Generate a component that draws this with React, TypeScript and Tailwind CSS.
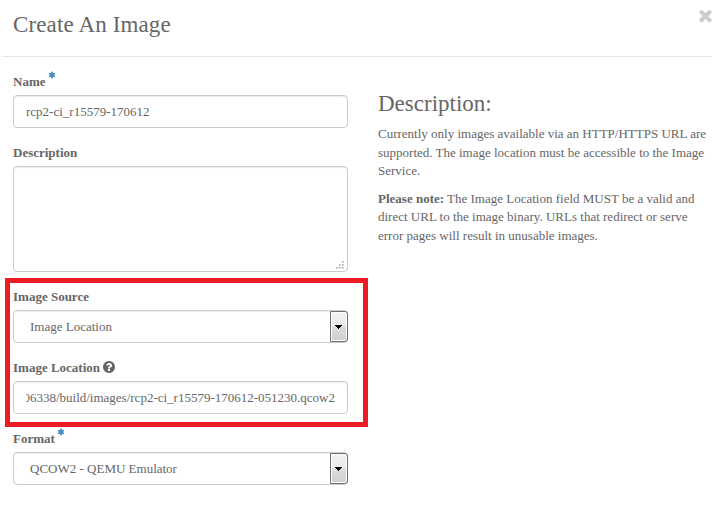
import type { ReactNode } from 'react';

const TIMES =
  'M1490 1322q0 40-28 68l-136 136q-28 28-68 28t-68-28l-294-294-294 294q-28 28-68 28t-68-28l-136-136q-28-28-28-68t28-68l294-294-294-294q-28-28-28-68t28-68l136-136q28-28 68-28t68 28l294 294 294-294q28-28 68-28t68 28l136 136q28 28 28 68t-28 68l-294 294 294 294q28 28 28 68z';
const QUESTION =
  'M1024 1376v-192q0-14-9-23t-23-9h-192q-14 0-23 9t-9 23v192q0 14 9 23t23 9h192q14 0 23-9t9-23zm256-672q0-88-55.5-163t-138.5-116-170-41q-243 0-371 213-15 24 8 42l132 100q7 6 19 6 16 0 25-12 53-68 86-92 34-24 86-24 48 0 85.5 26t37.5 59q0 38-20 61t-68 45q-63 28-115.5 86.5t-52.5 125.5v36q0 14 9 23t23 9h192q14 0 23-9t9-23q0-19 21.5-49.5t54.5-49.5q32-18 49-28.5t46-35 44.5-48 28-60.5 12.5-81zm384 192q0 209-103 385.5t-279.5 279.5-385.5 103-385.5-103-279.5-279.5-103-385.5 103-385.5 279.5-279.5 385.5-103 385.5 103 279.5 279.5 103 385.5z';
const ASTERISK =
  'M1546 1050q46 26 59.5 77.5t-12.5 97.5l-64 110q-26 46-77.5 59.5t-97.5-12.5l-266-153v307q0 52-38 90t-90 38h-128q-52 0-90-38t-38-90v-307l-266 153q-46 26-97.5 12.5t-77.5-59.5l-64-110q-26-46-12.5-97.5t59.5-77.5l266-154-266-154q-46-26-59.5-77.5t12.5-97.5l64-110q26-46 77.5-59.5t97.5 12.5l266 153v-307q0-52 38-90t90-38h128q52 0 90 38t38 90v307l266-153q46-26 97.5-12.5t77.5 59.5l64 110q26 46 12.5 97.5t-59.5 77.5l-266 154z';

function Icon({ d, className }: { d: string; className: string }) {
  return (
    <svg viewBox="0 0 1792 1792" fill="currentColor" className={className} aria-hidden="true">
      <path d={d} />
    </svg>
  );
}

function Label({ children, required, help }: { children: ReactNode; required?: boolean; help?: boolean }) {
  return (
    <div className="flex h-[18px] items-start font-bold leading-[18px] text-[#666]">
      <span>{children}</span>
      {required && <Icon d={ASTERISK} className="-mt-0.5 ml-[2.5px] size-[8px] text-[#428bca]" />}
      {help && <Icon d={QUESTION} className="ml-[2px] mt-[1px] size-[14px]" />}
    </div>
  );
}

const BOX = 'w-[335px] rounded-[4px] border border-[#ccc] bg-white shadow-[inset_0_1px_1px_rgba(0,0,0,0.075)]';

function Select({ value }: { value: string }) {
  return (
    <div className={`${BOX} mt-[4px] flex h-[33px] justify-between`}>
      <span className="pl-4 leading-[32px]">{value}</span>
      <span className="-mr-px flex w-[18px] items-center justify-center rounded-r-[3px] border border-[#707070] bg-[linear-gradient(#f2f2f2_0%,#ebebeb_49%,#dddddd_50%,#cfcfcf_100%)] shadow-[inset_0_0_0_1px_#fcfcfc]">
        <svg width="7" height="4" viewBox="0 0 7 4" shapeRendering="crispEdges" className="-ml-px mt-px">
          <path d="M0 0h7v1H6v1H5v1H4v1H3V3H2V2H1V1H0z" fill="#000" />
        </svg>
      </span>
    </div>
  );
}

export default function App() {
  return (
    <div className="relative h-[511px] w-[712px] overflow-hidden bg-white font-['Liberation_Serif','Times_New_Roman',serif] text-[13px] text-[#666]">
      <header className="ml-[3px] flex h-[57px] justify-between border-b border-[#e5e5e5] pl-[10px]">
        <h4 className="mt-[11px] text-[23px] leading-[28px] tracking-[0.13px]">Create An Image</h4>
        <button aria-label="Close" className="-mr-[3px] mt-[5.5px] size-[19px] text-[#ccc]">
          <Icon d={TIMES} className="size-[19px]" />
        </button>
      </header>
      <main className="flex pl-[13px]">
        <form className="w-[365px] pt-[16px]">
          <div className="h-[71px]">
            <Label required>Name</Label>
            <div className={`${BOX} mt-[4px] h-[33px] pl-3 leading-[32px]`}>rcp2-ci_r15579-170612</div>
          </div>
          <div className="h-[144px]">
            <Label>Description</Label>
            <div className={`${BOX} mt-[4px] flex h-[106px] items-end justify-end pb-[2px] pr-[3px]`}>
              <svg width="8" height="8" viewBox="0 0 8 8" shapeRendering="crispEdges">
                <path d="M6 0h2v2H6zM3 3h2v2H3zM6 3h2v2H6zM0 6h2v2H0zM3 6h2v2H3zM6 6h2v2H6z" fill="#d2d2d2" />
                <path d="M6 0h1v1H6zM3 3h1v1H3zM6 3h1v1H6zM0 6h1v1H0zM3 6h1v1H3zM6 6h1v1H6z" fill="#a8a8a8" />
              </svg>
            </div>
          </div>
          <div className="h-[71px]">
            <Label>Image Source</Label>
            <Select value="Image Location" />
          </div>
          <div className="h-[71px]">
            <Label help>Image Location</Label>
            <div className={`${BOX} mt-[4px] h-[33px] px-3`}>
              <div className="flex justify-end overflow-hidden whitespace-nowrap leading-[32px]">
                <span>06338/build/images/rcp2-ci_r15579-170612-051230.qcow2</span>
              </div>
            </div>
          </div>
          <div>
            <Label required>Format</Label>
            <Select value="QCOW2 - QEMU Emulator" />
          </div>
        </form>
        <section className="whitespace-nowrap pt-[33px]">
          <h3 className="text-[23px] leading-[28px]">Description:</h3>
          <p className="mt-[7px] leading-[18.57px]">
            Currently only images available via an HTTP/HTTPS URL are
            <br />
            supported. The image location must be accessible to the Image
            <br />
            Service.
          </p>
          <p className="mt-[9px] leading-[18.57px]">
            <b>Please note:</b> The Image Location field MUST be a valid and
            <br />
            direct URL to the image binary. URLs that redirect or serve
            <br />
            error pages will result in unusable images.
          </p>
        </section>
      </main>
      <div className="pointer-events-none absolute left-[5px] top-[278px] h-[149px] w-[363px] border-[5px] border-[#ed1c24]" />
    </div>
  );
}
